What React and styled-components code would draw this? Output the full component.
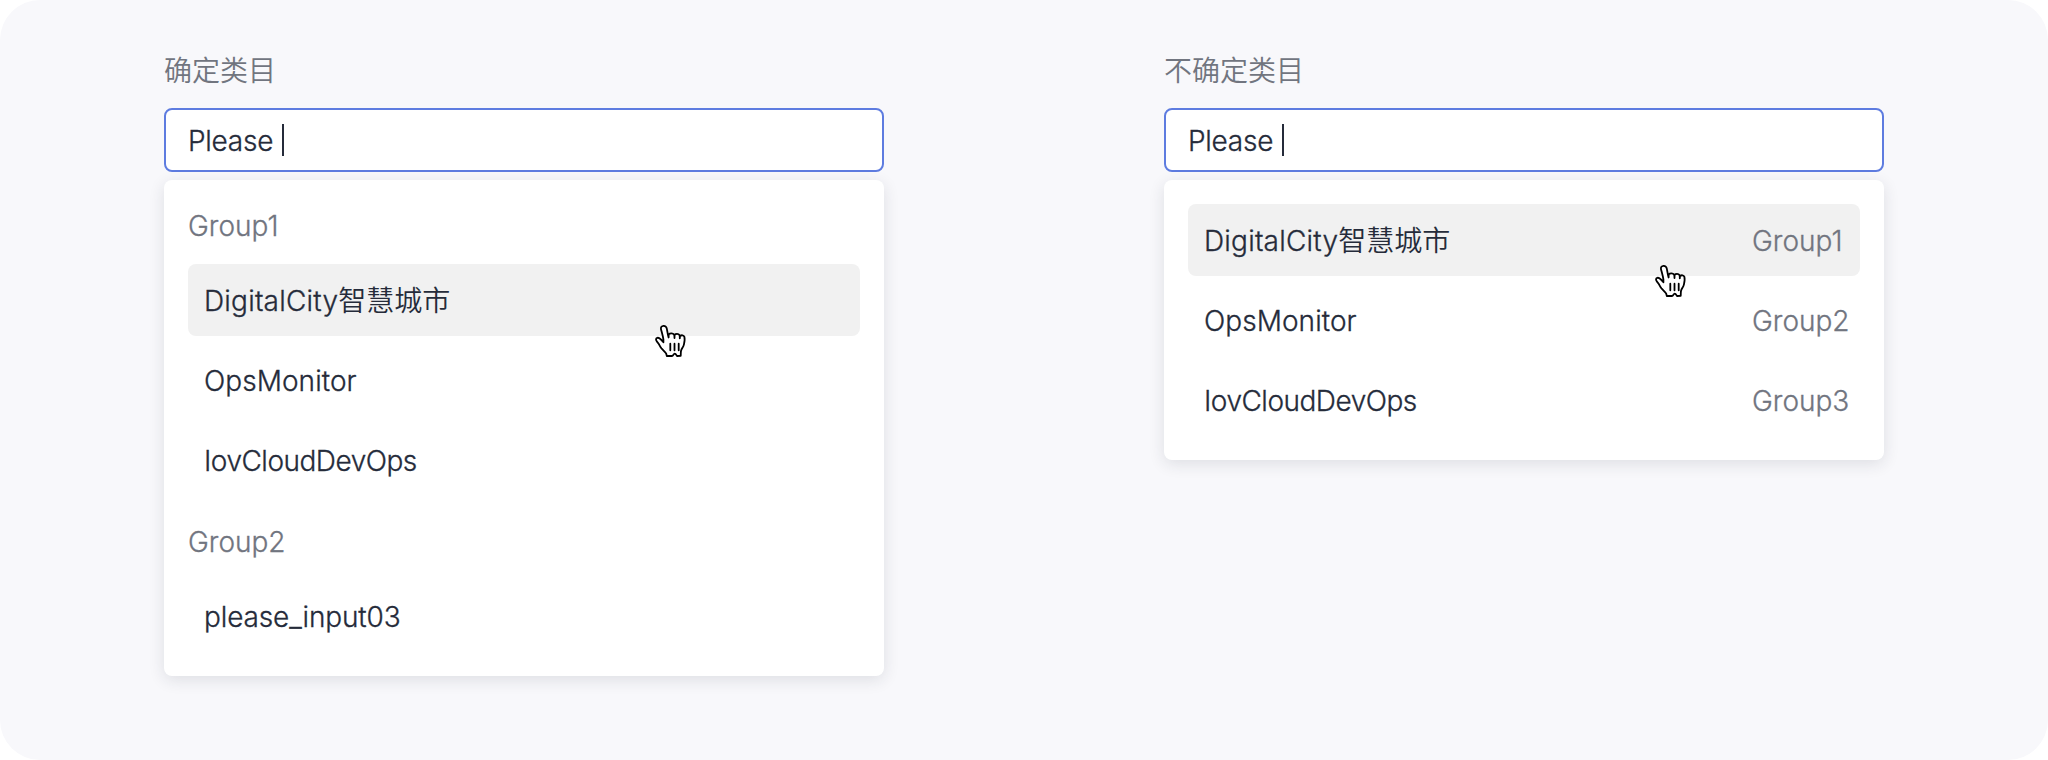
import React from 'react';
import styled, { createGlobalStyle } from 'styled-components';

const GlobalStyle = createGlobalStyle`
  *, *::before, *::after { box-sizing: border-box; }
  body {
    margin: 0;
    background: #fff;
    color: #252b3a;
    font: 350 28px/40px Inter, "Noto Sans CJK SC", sans-serif;
    -webkit-font-smoothing: antialiased;
  }
`;

const Canvas = styled.main`
  display: flex;
  gap: 280px;
  width: 2048px;
  height: 760px;
  padding: 51px 164px 0;
  background: #f8f8fb;
  border-radius: 40px;
`;

const Example = styled.section`
  width: 720px;
`;

const Title = styled.h2`
  height: 40px;
  margin: 0 0 17px;
  color: #71757f;
  font: inherit;
`;

const Field = styled.div`
  display: flex;
  align-items: center;
  height: 64px;
  padding: 0 22px;
  background: #fff;
  border: 2px solid #5e7ce0;
  border-radius: 8px;
`;

const Text = styled.span`
  padding-top: 1px;
  letter-spacing: ${(p) => p.$spacing || 0}px;
  -webkit-text-stroke: 0.3px currentColor;
`;

const Value = styled(Text)`
  width: 94px;
`;

const Caret = styled.i`
  width: 2px;
  height: 32px;
  background: #252b3a;
`;

const Menu = styled.div`
  display: flex;
  flex-direction: column;
  margin-top: 8px;
  padding: ${(p) => (p.$grouped ? '8px 24px 24px' : '24px')};
  background: #fff;
  border-radius: 8px;
  box-shadow: 0 4px 16px rgba(37, 43, 58, 0.12);
`;

const GroupLabel = styled.div`
  height: 76px;
  line-height: 77px;
  color: #71757f;
  -webkit-text-stroke: 0.3px currentColor;
`;

const Option = styled.div`
  position: relative;
  display: flex;
  align-items: center;
  justify-content: space-between;
  height: 72px;
  padding: 0 12px 0 16px;
  border-radius: 8px;
  background: ${(p) => (p.$active ? '#f1f1f1' : 'transparent')};

  & + & { margin-top: 8px; }
  & + ${GroupLabel} { margin-top: 8px; }
`;

const Name = styled(Text)``;

const Cjk = styled.span`
  letter-spacing: 0;
  -webkit-text-stroke: 0;
`;

const Tag = styled(Text)`
  width: 96px;
  color: #71757f;
  white-space: nowrap;
`;

const Pointer = styled.svg`
  position: absolute;
  left: 466px;
  top: 60px;
  width: 33px;
  height: 34px;
  fill: #fff;
  stroke: #000;
  stroke-width: 1.8;
  stroke-linecap: round;
  stroke-linejoin: round;
`;

function HandPointer() {
  return (
    <Pointer viewBox="-1 -1 33 34">
      <path d="M8.4 17.2 L8.4 14.3 C7.8 10.5 6.7 7 6 4.2 C5.5 2.2 6.8.9 8.5.8 C10.2.7 11.4 1.7 11.8 3.6 C12.4 6.5 12.7 9.5 13.6 12.5 L13.7 9.4 C15 8 18 8 19 9.5 C19.5 10.3 19.5 11.5 19.5 13 L19.6 9.8 C20.7 8.5 23.5 8.5 24.4 9.9 C24.9 10.8 24.8 12 24.8 13.3 L25 11 C26.5 9.8 28.7 10 29.4 11.9 C30 14 29.5 17 28.9 19.6 C28.2 22.4 26.4 23.8 26 26 C25.7 27.6 25.9 29 25.7 30.8 L22 31 C21.5 30.2 20.7 28.6 19.7 28.6 C18.7 28.6 18 30.8 17.2 31 L11.8 31 C11.5 29.9 11.5 28.6 10.7 27.8 L6.5 23.4 C5 21.7 4.6 19.9 3.3 18.2 C2.2 16.7 .9 15.9 1 14.4 C1.2 12.7 3 12.3 4.4 13.3 C6 14.4 7.2 15.8 8.4 17.2 Z" />
      <path d="M15.3 18.7V25.3 M19.5 18.7V25.3 M23.7 18.7V25.3" />
    </Pointer>
  );
}

function SearchField() {
  return (
    <Field>
      <Value $spacing={-0.25}>Please</Value>
      <Caret />
    </Field>
  );
}

const options = [
  { name: 'DigitalCity', cjk: '智慧城市', tag: 'Group1', spacing: 0.2, active: true },
  { name: 'OpsMonitor', tag: 'Group2', spacing: 0.05 },
  { name: 'IovCloudDevOps', tag: 'Group3', spacing: -0.5 },
];

function Options({ tagged }) {
  return options.map((o) => (
    <Option key={o.tag} $active={o.active}>
      <Name $spacing={o.spacing}>
        {o.name}
        {o.cjk && <Cjk>{o.cjk}</Cjk>}
      </Name>
      {tagged && <Tag>{o.tag}</Tag>}
      {o.active && <HandPointer />}
    </Option>
  ));
}

export default function App() {
  return (
    <Canvas>
      <GlobalStyle />
      <Example>
        <Title>确定类目</Title>
        <SearchField />
        <Menu $grouped>
          <GroupLabel>Group1</GroupLabel>
          <Options />
          <GroupLabel>Group2</GroupLabel>
          <Option>
            <Name $spacing={-0.13}>please_input03</Name>
          </Option>
        </Menu>
      </Example>
      <Example>
        <Title>不确定类目</Title>
        <SearchField />
        <Menu>
          <Options tagged />
        </Menu>
      </Example>
    </Canvas>
  );
}
